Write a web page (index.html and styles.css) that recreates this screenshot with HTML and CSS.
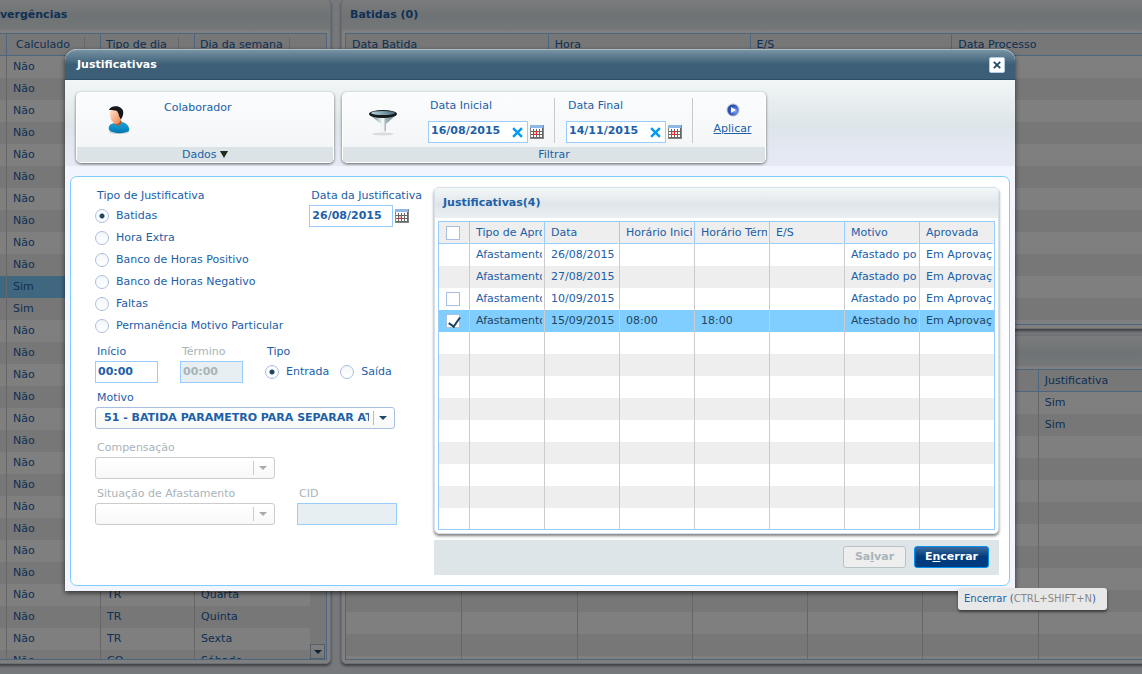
FILE: index.html
```html
<!DOCTYPE html>
<html lang="pt-BR">
<head>
    <meta charset="UTF-8">
    <meta name="viewport" content="width=device-width, initial-scale=1.0">
    <title>Justificativas</title>
    <link rel="stylesheet" href="styles.css">
</head>
<body>
    <svg class="sprite" aria-hidden="true">
        <symbol id="calendar" viewBox="0 0 14 14">
            <rect x="0" y="0" width="14" height="14" fill="#858585"/>
            <rect x="0" y="0" width="13" height="3" fill="#8fb8e6"/>
            <rect x="1" y="3" width="12" height="10" fill="#fff"/>
            <path d="M3.500 4v9M6.500 4v9M9.500 4v9M12.500 3v10M1 6.500h12M1 9.500h12M1 12.500h12" stroke="#666" fill="none"/>
            <path d="M6.500 6v4M3 9.500h4" stroke="#f22" fill="none"/>
            <rect x="4" y="7" width="2" height="2" fill="#fbb"/>
        </symbol>
        <symbol id="cross" viewBox="0 0 10 10">
            <path d="M1 1l8 8M9 1l-8 8" stroke="currentColor" stroke-width="2.200" fill="none"/>
        </symbol>
    </svg>

    <div class="page">
        <section class="panel side">
            <h2>Divergências</h2>
            <div class="grid">
                <table>
                    <colgroup><col class="edge"><col class="mid"><col class="mid"><col></colgroup>
                    <thead>
                        <tr><th></th><th><span>Calculado</span></th><th><span>Tipo de dia</span></th><th><span class="wide">Dia da semana</span></th></tr>
                    </thead>
                    <tbody id="divergencias"></tbody>
                </table>
                <div class="scroll"><button aria-label="Descer"></button></div>
            </div>
        </section>
        <div class="stack">
            <section class="panel">
                <h2>Batidas (0)</h2>
                <div class="grid short">
                    <table>
                        <thead>
                            <tr><th>Data Batida</th><th>Hora</th><th>E/S</th><th>Data Processo</th></tr>
                        </thead>
                        <tbody id="batidas"></tbody>
                    </table>
                </div>
            </section>
            <section class="panel lower">
                <h2></h2>
                <div class="grid">
                    <table>
                        <thead>
                            <tr><th></th><th></th><th></th><th></th><th></th><th></th><th>Justificativa</th></tr>
                        </thead>
                        <tbody id="ocorrencias"></tbody>
                    </table>
                </div>
            </section>
        </div>
    </div>

    <div class="overlay"></div>

    <div class="dialog" role="dialog" aria-labelledby="dialog-title">
        <header class="titlebar">
            <h1 id="dialog-title">Justificativas</h1>
            <button class="close" aria-label="Fechar"><svg width="8" height="8"><use href="#cross"/></svg></button>
        </header>

        <div class="toolbar">
            <div class="group person">
                <div class="group-body">
                    <svg class="icon" width="22" height="28" viewBox="0 0 22 28">
                        <defs>
                            <linearGradient id="shirt" x1="0" y1="0" x2="0" y2="1"><stop offset="0" stop-color="#1f9fd6"/><stop offset=".6" stop-color="#0a8cc6"/><stop offset="1" stop-color="#0673a8"/></linearGradient>
                            <linearGradient id="skin" x1="0" y1="0" x2="1" y2="1"><stop offset="0" stop-color="#ffe8d2"/><stop offset="1" stop-color="#ea7d45"/></linearGradient>
                        </defs>
                        <ellipse cx="11" cy="26" rx="10" ry="2" fill="#ccd3d6"/>
                        <path d="M1 24c-1-4 1-6 5-7 2 3 6 3 8-1 5 1 8 5 7 9-5 3-16 3-20-1z" fill="url(#shirt)"/>
                        <path d="M6 17c2 4 7 3 8-1l-2-3-5 2z" fill="#a8582e"/>
                        <path d="M2 5c2-2 7-3 9-1l3 3c0 5-1 8-3 10-2 2-5 1-6-1-3-2-3-7-3-11z" fill="url(#skin)"/>
                        <path d="M1 4c1-4 9-5 12-2 3 2 3 7 0 11-1 0-1-2-2-3 0-2-1-3-2-5-2-1-5-1-8-1z" fill="#15171a"/>
                    </svg>
                    <span>Colaborador</span>
                </div>
                <div class="group-foot">Dados <i class="caret"></i></div>
            </div>
            <div class="group filter">
                <div class="group-body">
                    <svg class="icon funnel" width="30" height="28" viewBox="0 0 30 28">
                        <defs>
                            <linearGradient id="cone"><stop offset="0" stop-color="#56666e"/><stop offset=".4" stop-color="#d5e3e9"/><stop offset=".5" stop-color="#fff"/><stop offset=".6" stop-color="#a5b6be"/><stop offset="1" stop-color="#6b7c84"/></linearGradient>
                            <linearGradient id="rim"><stop offset="0" stop-color="#b5d3df"/><stop offset="1" stop-color="#4b6c7b"/></linearGradient>
                        </defs>
                        <ellipse cx="15" cy="25" rx="11" ry="1.500" fill="#d8dcde"/>
                        <path d="M2 6l11 9v6c0 2 5 2 5 0v-6l10-9z" fill="url(#cone)"/>
                        <ellipse cx="15" cy="5" rx="14" ry="4" fill="#15191b"/>
                        <ellipse cx="15" cy="4" rx="12" ry="2" fill="url(#rim)"/>
                    </svg>
                    <div class="range">
                        <label for="inicial">Data Inicial</label>
                        <div class="date">
                            <span class="box"><input id="inicial" type="text" value="16/08/2015"><button class="clear" aria-label="Limpar"><svg width="11" height="11"><use href="#cross"/></svg></button></span>
                            <button class="cal" aria-label="Calendário"><svg width="14" height="14"><use href="#calendar"/></svg></button>
                        </div>
                    </div>
                    <div class="range">
                        <label for="final">Data Final</label>
                        <div class="date">
                            <span class="box"><input id="final" type="text" value="14/11/2015"><button class="clear" aria-label="Limpar"><svg width="11" height="11"><use href="#cross"/></svg></button></span>
                            <button class="cal" aria-label="Calendário"><svg width="14" height="14"><use href="#calendar"/></svg></button>
                        </div>
                    </div>
                    <a class="apply" href="#">
                        <svg width="14" height="14" viewBox="0 0 14 14">
                            <defs><radialGradient id="ball" cx=".7" cy=".6"><stop offset="0" stop-color="#86a8ff"/><stop offset="1" stop-color="#2c4fb4"/></radialGradient></defs>
                            <circle cx="7" cy="7" r="6.500" fill="#b9bfc9"/>
                            <circle cx="7" cy="7" r="5.500" fill="url(#ball)"/>
                            <path d="M5 4l5 3-5 3z" fill="#fff"/>
                        </svg>
                        <span>Aplicar</span>
                    </a>
                </div>
                <div class="group-foot">Filtrar</div>
            </div>
        </div>

        <div class="content">
            <form class="form">
                <div class="row spread">
                    <fieldset>
                        <legend>Tipo de Justificativa</legend>
                        <label class="radio"><input type="radio" name="justificativa" checked>Batidas</label>
                        <label class="radio"><input type="radio" name="justificativa">Hora Extra</label>
                        <label class="radio"><input type="radio" name="justificativa">Banco de Horas Positivo</label>
                        <label class="radio"><input type="radio" name="justificativa">Banco de Horas Negativo</label>
                        <label class="radio"><input type="radio" name="justificativa">Faltas</label>
                        <label class="radio"><input type="radio" name="justificativa">Permanência Motivo Particular</label>
                    </fieldset>
                    <div class="field">
                        <label for="data">Data da Justificativa</label>
                        <div class="date">
                            <input class="box day" id="data" type="text" value="26/08/2015">
                            <button type="button" class="cal" aria-label="Calendário"><svg width="14" height="14"><use href="#calendar"/></svg></button>
                        </div>
                    </div>
                </div>
                <div class="row">
                    <div class="field">
                        <label for="inicio">Início</label>
                        <input class="box time" id="inicio" type="text" value="00:00">
                    </div>
                    <div class="field off">
                        <label for="termino">Término</label>
                        <input class="box time" id="termino" type="text" value="00:00" disabled>
                    </div>
                    <fieldset>
                        <legend>Tipo</legend>
                        <div class="pair">
                            <label class="radio"><input type="radio" name="tipo" checked>Entrada</label>
                            <label class="radio"><input type="radio" name="tipo">Saída</label>
                        </div>
                    </fieldset>
                </div>
                <div class="field">
                    <label for="motivo">Motivo</label>
                    <div class="combo large">
                        <select id="motivo"><option>51 - BATIDA PARAMETRO PARA SEPARAR ATRASO</option></select>
                    </div>
                </div>
                <div class="field off apart">
                    <label for="compensacao">Compensação</label>
                    <div class="combo"><select id="compensacao" disabled></select></div>
                </div>
                <div class="row">
                    <div class="field off">
                        <label for="situacao">Situação de Afastamento</label>
                        <div class="combo"><select id="situacao" disabled></select></div>
                    </div>
                    <div class="field off">
                        <label for="cid">CID</label>
                        <input class="box cid" id="cid" type="text" disabled>
                    </div>
                </div>
            </form>

            <div class="list">
                <section class="panel">
                    <h2>Justificativas(4)</h2>
                    <div class="grid">
                        <table>
                            <colgroup><col class="check"><col><col><col><col><col><col><col></colgroup>
                            <thead>
                                <tr>
                                    <th><input type="checkbox" aria-label="Selecionar todas"></th>
                                    <th>Tipo de Aprovação</th><th>Data</th><th>Horário Inicial</th><th>Horário Término</th><th>E/S</th><th>Motivo</th><th>Aprovada</th>
                                </tr>
                            </thead>
                            <tbody id="justificativas"></tbody>
                        </table>
                    </div>
                </section>
                <footer class="actions">
                    <button class="btn" disabled>Sa<u>l</u>var</button>
                    <button class="btn primary">E<u>n</u>cerrar</button>
                </footer>
            </div>
        </div>
        <div class="tooltip" role="tooltip">Encerrar (<span>CTRL+SHIFT+N</span>)</div>
    </div>

    <script>
        const box = '<input type="checkbox" aria-label="Selecionar">';
        const checked = '<input type="checkbox" aria-label="Selecionar" checked>';

        const justificativas = [
            ['', 'Afastamento', '26/08/2015', '', '', '', 'Afastado por', 'Em Aprovação'],
            ['', 'Afastamento', '27/08/2015', '', '', '', 'Afastado por', 'Em Aprovação'],
            [box, 'Afastamento', '10/09/2015', '', '', '', 'Afastado por', 'Em Aprovação'],
            [checked, 'Afastamento', '15/09/2015', '08:00', '18:00', '', 'Atestado horas', 'Em Aprovação']
        ];

        const divergencias = [];
        for (let i = 0; i < 28; i++) {
            divergencias.push(['', i === 10 || i === 11 ? 'Sim' : 'Não', '', '']);
        }
        divergencias[24] = ['', 'Não', 'TR', 'Quarta'];
        divergencias[25] = ['', 'Não', 'TR', 'Quinta'];
        divergencias[26] = ['', 'Não', 'TR', 'Sexta'];
        divergencias[27] = ['', 'Não', 'CO', 'Sábado'];

        const ocorrencias = [
            ['', '', '', '', '', '', 'Sim'],
            ['', '', '', '', '', '', 'Sim']
        ];

        // empty rows complete the striped body
        function fillTable(id, rows, columns, total, selected) {
            const body = document.getElementById(id);
            for (let i = 0; i < total; i++) {
                const tr = body.insertRow();
                if (i === selected) {
                    tr.className = 'selected';
                }
                for (let c = 0; c < columns; c++) {
                    tr.insertCell().innerHTML = rows[i] ? rows[i][c] : '';
                }
            }
        }

        fillTable('divergencias', divergencias, 4, 28, 10);
        fillTable('batidas', [], 4, 13);
        fillTable('ocorrencias', ocorrencias, 7, 13);
        fillTable('justificativas', justificativas, 8, 13, 3);
    </script>
</body>
</html>
```
FILE: styles.css
```css
* {
    box-sizing: border-box;
}
body {
    margin: 0;
    height: 100vh;
    overflow: hidden;
    position: relative;
    background: #edf2f8;
    color: #2060a8;
    font-family: "DejaVu Sans", Verdana, sans-serif;
    font-size: 11px;
    line-height: 16px;
}
h1, h2 {
    margin: 0;
    font-size: 11px;
}
button, input, select {
    font: inherit;
    color: inherit;
    margin: 0;
    padding: 0;
}
button {
    cursor: pointer;
}
.sprite {
    position: absolute;
    width: 0;
    height: 0;
}

/* panels and grids */
.page {
    display: flex;
    gap: 10px;
    margin-left: -22px;
    margin-right: -16px;
}
.panel {
    background: #fff;
    border: 1px solid #d5e0ea;
    border-radius: 5px;
    padding: 0 3px 3px;
    box-shadow: 0 2px 3px rgba(0, 0, 0, 0.5);
}
.panel h2 {
    height: 30px;
    margin: 0 -3px 3px;
    padding: 7px 8px;
    border-radius: 4px 4px 0 0;
    background: linear-gradient(#f4f7f8, #dfe6ea 55%, #eaf0f2);
}
.side {
    flex: 0 0 353px;
    margin-top: -1px;
}
.stack {
    flex: 1;
    display: flex;
    flex-direction: column;
    gap: 6px;
    margin-top: -1px;
}
.grid {
    display: flex;
    position: relative;
    height: 627px;
    overflow: hidden;
    border: 1px solid #99ccff;
}
.grid.short {
    height: 292px;
}
.lower .grid {
    height: 291px;
}
table {
    width: 100%;
    table-layout: fixed;
    border-collapse: separate;
    border-spacing: 0;
}
th, td {
    height: 22px;
    padding: 0 0 0 6px;
    overflow: hidden;
    white-space: nowrap;
    text-align: left;
    font-weight: normal;
    border-left: 1px solid #ccc;
}
th {
    background: #eee;
    border-left-color: #99ccff;
    border-bottom: 1px solid #99ccff;
}
th:first-child, td:first-child {
    border-left: 0;
}
tbody tr:nth-child(even) {
    background: #eee;
}
tbody tr.selected {
    background: #7fceff;
}
.page .short td {
    border-left: 0;
}
.side th span {
    display: block;
    width: 69px;
    margin-left: 3px;
    border-right: 1px solid #ccc;
}
.side th span.wide {
    width: 90px;
    margin-left: -1px;
}
.side th:nth-child(3) span {
    margin-left: -1px;
    width: 73px;
}
.edge {
    width: 23px;
}
.mid {
    width: 94px;
}
.scroll {
    position: absolute;
    top: 22px;
    right: 0;
    bottom: 0;
    width: 16px;
    display: flex;
    align-items: flex-end;
    background: #eee;
}
.scroll button {
    width: 15px;
    height: 15px;
    border: 1px solid #a9bfdc;
    background: linear-gradient(#fff, #eee);
    display: flex;
    align-items: center;
    justify-content: center;
}
.scroll button::before {
    content: "";
    border: 4px solid transparent;
    border-top-color: #1c4a68;
    border-bottom: 0;
}
.overlay {
    position: absolute;
    inset: 0;
    background: rgba(0, 0, 0, 0.5);
}

/* dialog */
.dialog {
    position: absolute;
    top: 49px;
    left: 65px;
    right: 127px;
    padding-bottom: 5px;
    background: #f2f5fe;
    border-radius: 12px 12px 0 0;
    box-shadow: 0 2px 5px rgba(0, 0, 0, 0.6);
}
.titlebar {
    display: flex;
    align-items: center;
    justify-content: space-between;
    height: 31px;
    padding: 0 10px 0 12px;
    color: #fff;
    border-top: 1px solid #a9bcc8;
    border-bottom: 1px solid #2c4f67;
    border-radius: 12px 12px 0 0;
    background: linear-gradient(#7792a3, #3c5f77 50%);
}
.close {
    display: flex;
    align-items: center;
    justify-content: center;
    width: 16px;
    height: 16px;
    color: #1e4763;
    background: #fff;
    border: 1px solid #b4cbe4;
    border-radius: 2px;
}
.toolbar {
    display: flex;
    gap: 8px;
    height: 86px;
    padding: 12px 11px 3px;
    background: linear-gradient(#f2f6f7, #dde5e8 54%, #dfe5ed 58%, #e6eaf4);
}
.group {
    display: flex;
    flex-direction: column;
    border: 1px solid #fff;
    border-radius: 5px;
    background: linear-gradient(#fbfcfd, #f1f4f6);
    box-shadow: 0 1px 3px rgba(0, 0, 0, 0.6);
}
.group-body {
    display: flex;
    flex: 1;
}
.group-foot {
    height: 15px;
    text-align: center;
    background: #dce3e7;
}
.person {
    width: 258px;
}
.person .icon {
    margin: 13px 34px 0 31px;
}
.person span {
    margin-top: 7px;
}
.caret {
    display: inline-block;
    border: 4px solid transparent;
    border-top: 7px solid #1b2a1b;
    border-bottom: 0;
}
.filter {
    width: 424px;
}
.funnel {
    margin: 16px 30px 0 25px;
}
.range {
    width: 127px;
    height: 45px;
    margin: 5px 11px 0 0;
    border-right: 1px solid #c5cace;
}
.range label {
    display: block;
    margin-bottom: 7px;
    padding-left: 2px;
}
.date {
    display: flex;
    align-items: center;
    gap: 2px;
}
.box {
    height: 22px;
    padding: 0 0 2px 2px;
    border: 1px solid #99ccff;
    background: #fff;
    font-weight: bold;
}
.range .box {
    display: flex;
    align-items: center;
    width: 100px;
}
.range input {
    width: 81px;
    border: 0;
    background: none;
}
.clear, .cal {
    display: flex;
    border: 0;
    background: none;
}
.clear {
    color: #0099f5;
    margin-top: 3px;
}
.apply {
    flex: 1;
    display: flex;
    flex-direction: column;
    align-items: center;
    gap: 4px;
    padding: 10px 4px 0 0;
    color: inherit;
}

/* form */
.content {
    display: flex;
    margin: 10px 5px 0;
    padding: 10px 10px 10px 24px;
    background: #fff;
    border: 1px solid #7fcdff;
    border-radius: 7px;
}
.form {
    flex: 0 0 339px;
    display: flex;
    flex-direction: column;
    gap: 6px;
}
.row {
    display: flex;
    gap: 22px;
}
.spread {
    justify-content: space-between;
    padding-right: 12px;
}
fieldset {
    min-width: 0;
    margin: 0;
    padding: 0;
    border: 0;
}
legend, .field > label {
    display: block;
    height: 18px;
    line-height: 18px;
    padding: 0 0 0 2px;
}
.apart {
    margin-top: 4px;
}
.off {
    color: #a9b4b8;
}
.off .box {
    background: #e8eff3;
}
.radio {
    display: flex;
    align-items: center;
    gap: 7px;
    height: 22px;
}
.pair {
    display: flex;
    gap: 11px;
}
input[type="radio"] {
    appearance: none;
    width: 14px;
    height: 14px;
    border: 1px solid #a9bfe0;
    border-radius: 50%;
    background: linear-gradient(#f4f6f8, #fff);
}
input[type="radio"]:checked {
    background: radial-gradient(circle, #1f4560 2px, #fafbfc 3px);
}
.day {
    width: 84px;
}
.time {
    width: 63px;
}
.cid {
    width: 100px;
}
.combo {
    display: flex;
    align-items: center;
    position: relative;
    width: 180px;
    height: 22px;
    padding: 0 25px 0 8px;
    border: 1px solid #ccc;
    border-radius: 3px;
    background: linear-gradient(#fff, #f8f8f8);
}
.combo select {
    appearance: none;
    width: 100%;
    border: 0;
    background: none;
    font-weight: bold;
    text-overflow: clip;
}
.combo::before {
    content: "";
    position: absolute;
    top: 3px;
    right: 20px;
    height: 14px;
    border-left: 1px solid #ccc;
}
.combo::after {
    content: "";
    position: absolute;
    top: 8px;
    right: 7px;
    border: 4px solid transparent;
    border-top-color: #aaa;
    border-bottom: 0;
}
.combo.large {
    width: 300px;
    border-color: #a9bfe0;
}
.large::before {
    border-color: #a9bfe0;
}
.large::after {
    border-top-color: #1c4a68;
}

/* list */
.list {
    flex: 1;
    min-width: 0;
}
.list .grid {
    height: 309px;
}
.list th, .list td {
    border-right: 2px solid transparent;
}
.list .selected {
    color: #1f4560;
}
.check {
    width: 30px;
}
.list th:first-child, .list td:first-child {
    padding-left: 7px;
}
input[type="checkbox"] {
    appearance: none;
    display: block;
    width: 14px;
    height: 14px;
    border: 1px solid #a9bfe0;
    background: #fff;
}
input[type="checkbox"]:checked::before {
    content: "";
    display: block;
    width: 5px;
    height: 10px;
    margin: 0 0 0 4px;
    border: solid #1f4560;
    border-width: 0 2px 2px 0;
    transform: rotate(35deg);
}
.actions {
    display: flex;
    justify-content: flex-end;
    gap: 8px;
    margin-top: 6px;
    padding: 6px 10px 7px;
    background: #dde5e8;
}
.btn {
    width: 63px;
    height: 22px;
    font-weight: bold;
    color: #a9b4b8;
    border: 1px solid #b9c2c6;
    border-radius: 3px;
    background: #eee;
}
.btn.primary {
    width: 75px;
    color: #fff;
    border-color: #0091f2;
    background: linear-gradient(#3c699c, #003c7d 50%);
}
.tooltip {
    position: absolute;
    left: 893px;
    top: 539px;
    width: 149px;
    height: 22px;
    padding: 3px 6px;
    font-size: 10px;
    white-space: nowrap;
    background: #e8e8e8;
    border-radius: 3px;
    box-shadow: 0 2px 3px rgba(0, 0, 0, 0.5);
}
.tooltip span {
    color: #888;
}
```
